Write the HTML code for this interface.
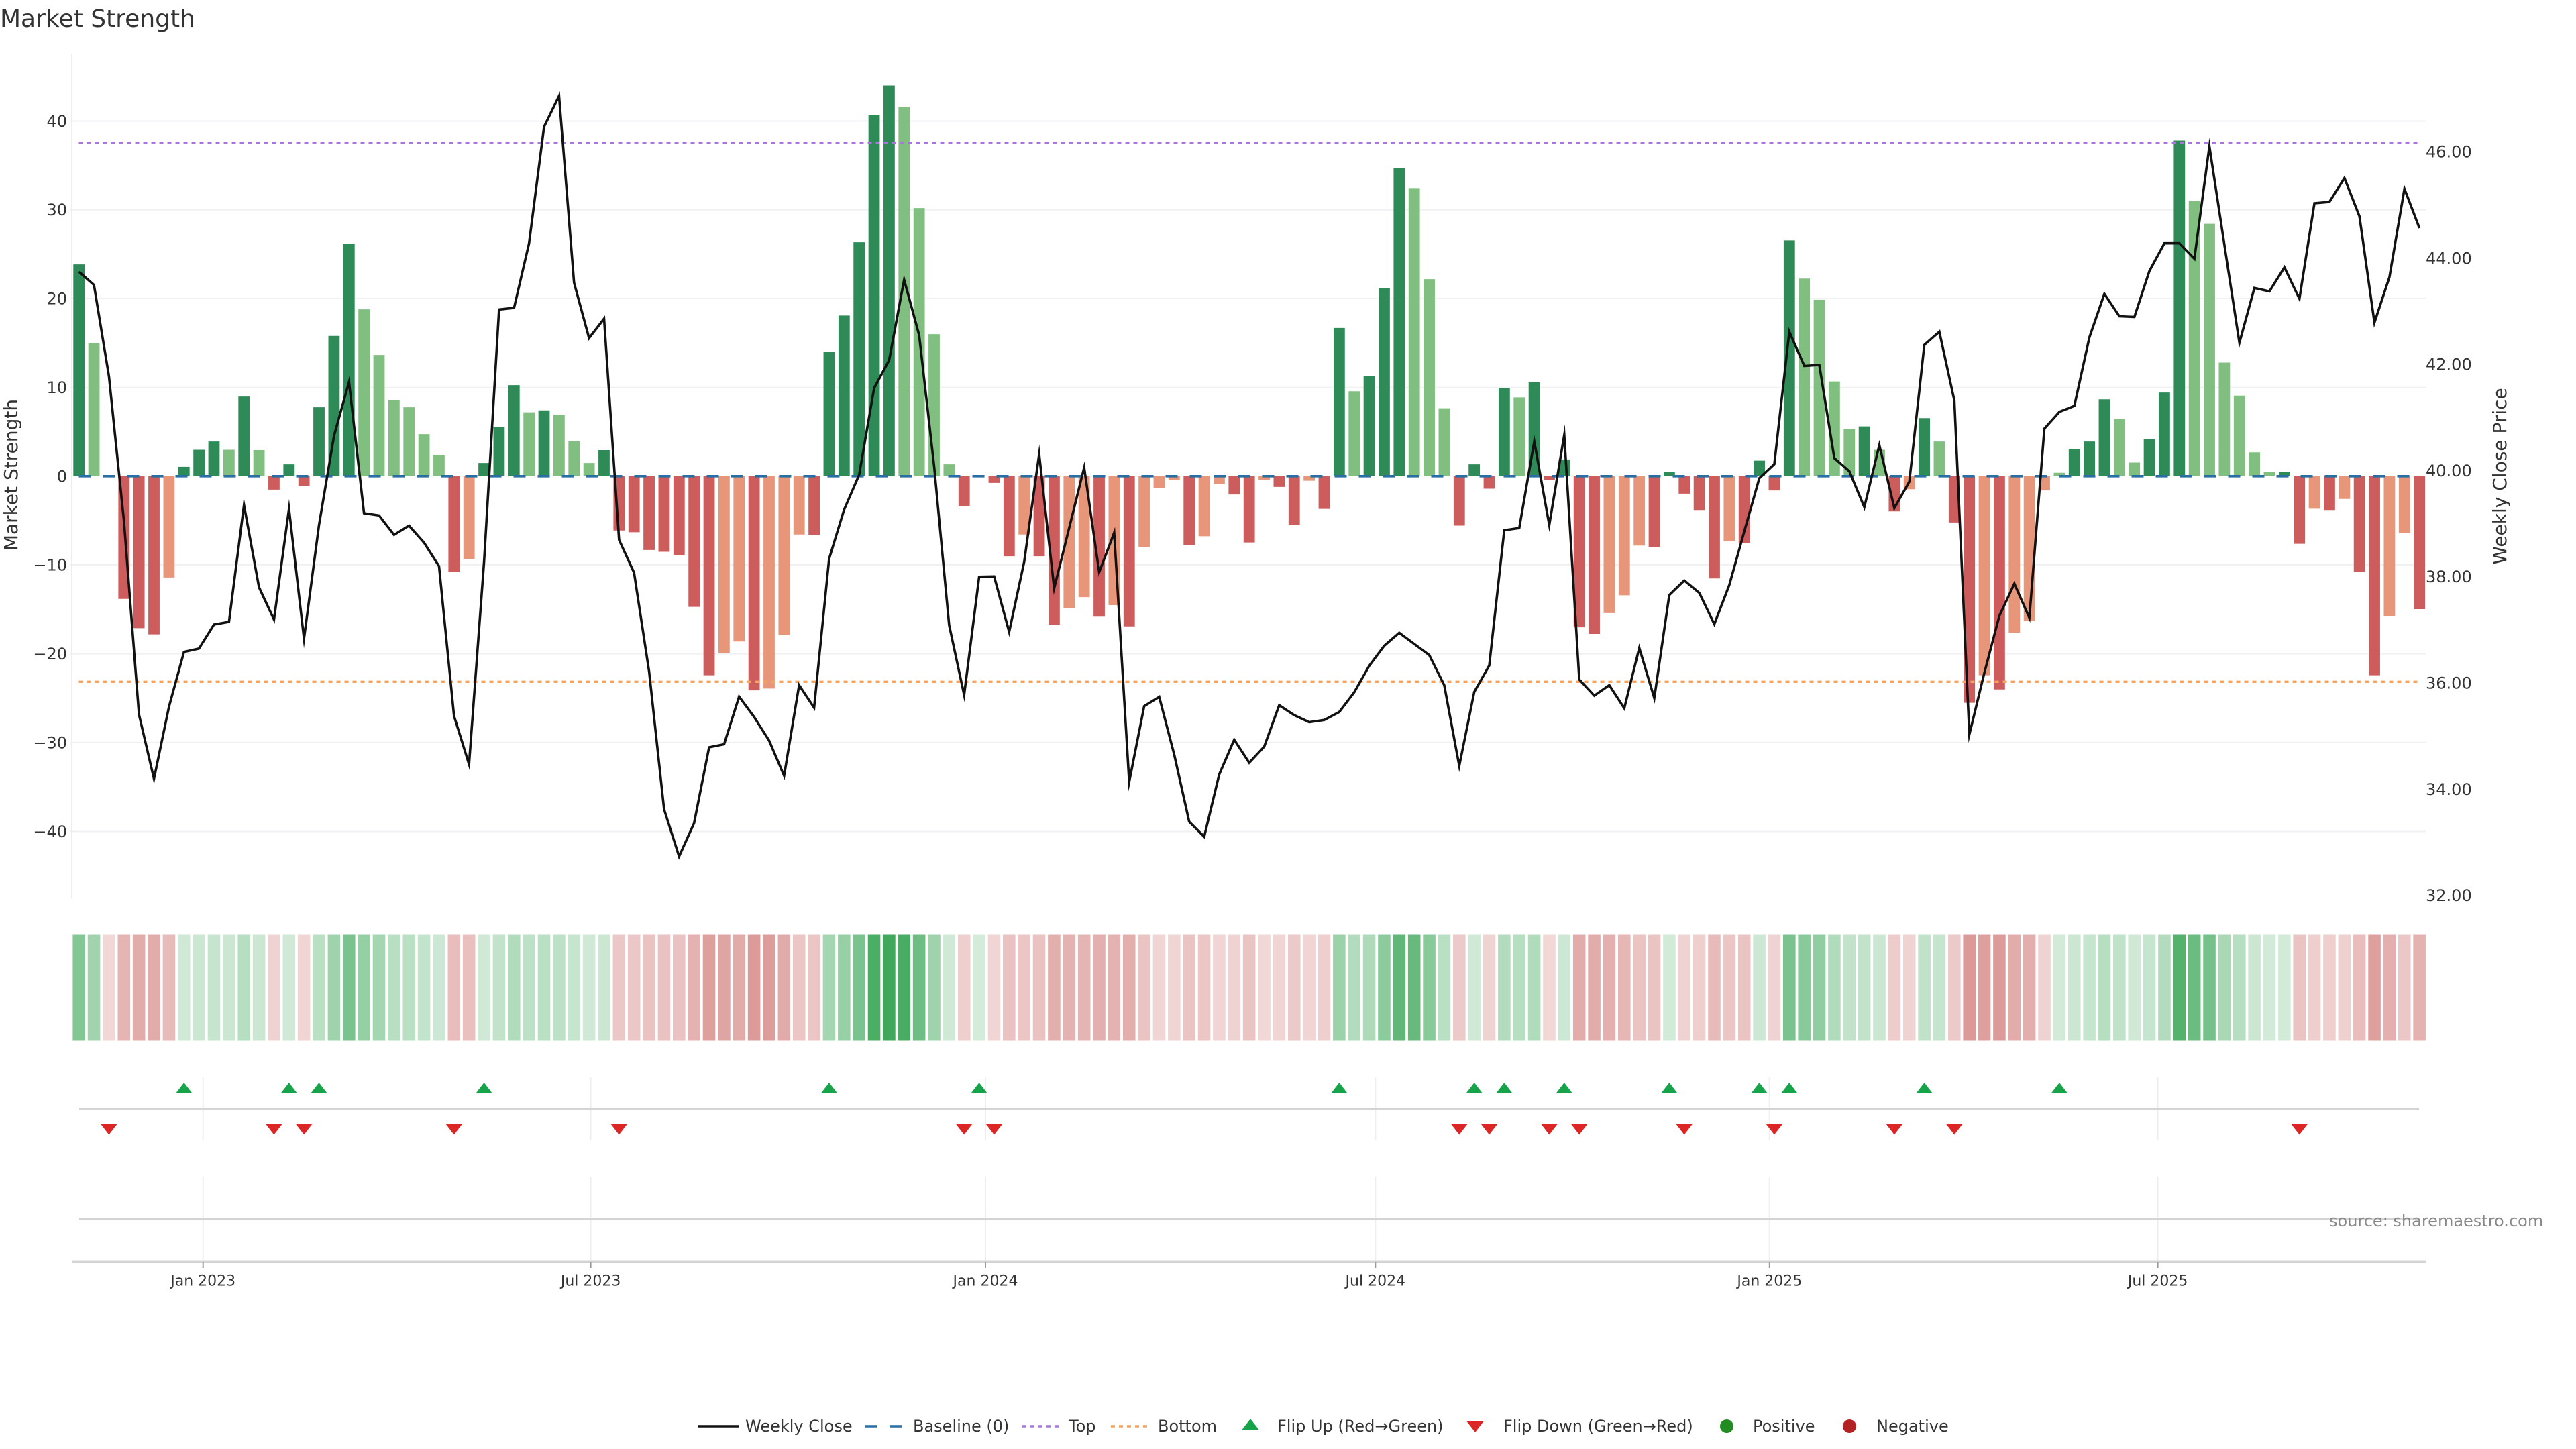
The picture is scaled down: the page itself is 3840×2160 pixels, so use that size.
<!DOCTYPE html>
<html lang="en"><head><meta charset="utf-8"><title>Market Strength</title>
<style>
html,body{margin:0;padding:0;background:#fff;width:3840px;height:2160px;overflow:hidden}
svg{display:block;font-family:"DejaVu Sans","Liberation Sans",sans-serif}
path,polyline{vector-effect:non-scaling-stroke}
text{fill:#333}
.a{font-size:24px}
.x{font-size:22px;text-anchor:middle}
</style></head><body>
<svg width="3840" height="2160" viewBox="0 0 3840 2160" xmlns="http://www.w3.org/2000/svg">
<rect width="3840" height="2160" fill="#fff"/>
<text x="0" y="40" style="font-size:36px">Market Strength</text>

<!-- gridlines -->
<g stroke="#f1f1f4" stroke-width="2" fill="none">
<path d="M105 180.5H3616M105 312.7H3616M105 445H3616M105 577.6H3616M105 841.9H3616M105 974.6H3616M105 1106.8H3616M105 1239.5H3616"/>
</g>
<path d="M107 80V1339" stroke="#eeeeee" stroke-width="2" fill="none"/>

<!-- y axis labels -->
<g class="a" text-anchor="end">
<text x="100" y="189">40</text>
<text x="100" y="321">30</text>
<text x="100" y="453.5">20</text>
<text x="100" y="586">10</text>
<text x="100" y="718.5">0</text>
<text x="100" y="850.5">−10</text>
<text x="100" y="983">−20</text>
<text x="100" y="1115.5">−30</text>
<text x="100" y="1248">−40</text>
</g>
<g class="a">
<text x="3616" y="234.7">46.00</text>
<text x="3616" y="393.5">44.00</text>
<text x="3616" y="551.4">42.00</text>
<text x="3616" y="710">40.00</text>
<text x="3616" y="868">38.00</text>
<text x="3616" y="1026.7">36.00</text>
<text x="3616" y="1185">34.00</text>
<text x="3616" y="1343">32.00</text>
</g>
<text transform="translate(26 708) rotate(-90)" text-anchor="middle" style="font-size:28px">Market Strength</text>
<text transform="translate(3736 710) rotate(-90)" text-anchor="middle" style="font-size:28px">Weekly Close Price</text>

<!-- bars -->
<g transform="translate(117.7 710) scale(22.365 -13.24)" fill="none" stroke-width="16.8">
<path stroke="#2e8b57" d="M0 0V23.86M7 0V1.07M8 0V2.98M9 0V3.92M11 0V8.98M14 0V1.35M16 0V7.77M17 0V15.8M18 0V26.2M27 0V1.5M28 0V5.58M29 0V10.26M31 0V7.42M35 0V2.95M50 0V14M51 0V18.1M52 0V26.35M53 0V40.7M54 0V44M84 0V16.7M86 0V11.3M87 0V21.15M88 0V34.7M93 0V1.35M95 0V9.95M97 0V10.58M99 0V1.9M106 0V.45M112 0V1.77M114 0V26.56M119 0V5.62M123 0V6.55M133 0V3.1M134 0V3.92M135 0V8.67M138 0V4.16M139 0V9.43M140 0V37.8M147 0V.52"/>
<path stroke="#80bf80" d="M1 0V14.98M10 0V2.98M12 0V2.95M19 0V18.8M20 0V13.66M21 0V8.6M22 0V7.77M23 0V4.75M24 0V2.4M30 0V7.2M32 0V6.93M33 0V4M34 0V1.5M55 0V41.6M56 0V30.2M57 0V16M58 0V1.35M60 0V.1M85 0V9.57M89 0V32.45M90 0V22.2M91 0V7.66M96 0V8.88M115 0V22.26M116 0V19.87M117 0V10.68M118 0V5.34M120 0V2.98M124 0V3.92M132 0V.4M136 0V6.5M137 0V1.55M141 0V31M142 0V28.43M143 0V12.8M144 0V9.08M145 0V2.7M146 0V.45"/>
<path stroke="#cd5c5c" d="M3 0V-13.8M4 0V-17.1M5 0V-17.8M13 0V-1.5M15 0V-1.1M25 0V-10.8M36 0V-6.1M37 0V-6.3M38 0V-8.3M39 0V-8.5M40 0V-8.9M41 0V-14.7M42 0V-22.4M45 0V-24.1M49 0V-6.6M59 0V-3.4M61 0V-.75M62 0V-9M64 0V-9M65 0V-16.7M68 0V-15.8M70 0V-16.9M74 0V-7.7M77 0V-2.05M78 0V-7.45M80 0V-1.2M81 0V-5.5M83 0V-3.67M92 0V-5.55M94 0V-1.4M98 0V-.4M100 0V-17M101 0V-17.75M105 0V-8M107 0V-1.95M108 0V-3.8M109 0V-11.5M111 0V-7.55M113 0V-1.6M121 0V-3.95M125 0V-5.2M126 0V-25.5M128 0V-24M148 0V-7.6M150 0V-3.8M152 0V-10.75M153 0V-22.4M156 0V-14.95"/>
<path stroke="#e8967a" d="M2 0V-.1M6 0V-11.4M26 0V-9.3M43 0V-19.9M44 0V-18.6M46 0V-23.9M47 0V-17.9M48 0V-6.55M63 0V-6.55M66 0V-14.8M67 0V-13.6M69 0V-14.5M71 0V-8M72 0V-1.3M73 0V-.45M75 0V-6.75M76 0V-.87M79 0V-.4M82 0V-.5M102 0V-15.4M103 0V-13.4M104 0V-7.8M110 0V-7.3M122 0V-1.45M127 0V-22.4M129 0V-17.6M130 0V-16.3M131 0V-1.6M149 0V-3.65M151 0V-2.55M154 0V-15.75M155 0V-6.4"/>
</g>

<!-- reference lines -->
<path d="M117.5 709.8H3606" stroke="#2a6fa3" stroke-width="3.6" stroke-dasharray="18 18" fill="none"/>
<path d="M117.5 213H3606" stroke="#a678dc" stroke-width="3.4" stroke-dasharray="6 6" fill="none"/>
<path d="M117.5 1016.3H3606" stroke="#f4a460" stroke-width="3.4" stroke-dasharray="6 6" fill="none"/>

<!-- weekly close -->
<g transform="translate(117.7 0) scale(22.365 1)">
<polyline fill="none" stroke="#111" stroke-width="3.6" stroke-linejoin="miter" stroke-miterlimit="20" points="0,405 1,424.7 2,561 3,777 4,1065 5,1161 6,1053.5 7,971.8 8,966.8 9,931 10,927 11,752.8 12,875.4 13,923.6 14,758.3 15,952 16,782.6 17,649.7 18,569.3 19,765 20,768.4 21,797.3 22,783.6 23,808.8 24,844 25,1067.3 26,1139.4 27,838 28,461.4 29,459 30,362.7 31,189 32,142.8 33,421.5 34,504 35,475 36,804.7 37,853.8 38,1000.7 39,1206.4 40,1276.7 41,1227 42,1114 43,1109.5 44,1038.4 45,1068.7 46,1104 47,1156.4 48,1021.4 49,1055 50,833 51,759.7 52,708 53,578.5 54,537 55,417 56,499.5 57,695 58,931.9 59,1036 60,859.8 61,859.3 62,942 63,837.7 64,677 65,877 66,787 67,697 68,852.9 69,794 70,1165.6 71,1052.6 72,1038.8 73,1124.7 74,1224.8 75,1247.3 76,1154.5 77,1102.7 78,1137 79,1113 80,1051.2 81,1066 82,1076.5 83,1073.3 84,1061.3 85,1032 86,992.5 87,962.6 88,943.3 89,959.9 90,976.4 91,1021.4 92,1141.7 93,1031.5 94,992 95,790.4 96,787.2 97,658 98,782.6 99,648.3 100,1013 101,1037 102,1021.4 103,1055.8 104,965.8 105,1040.7 106,886.9 107,865.3 108,883.7 109,930.5 110,872 111,792 112,712.9 113,692 114,494.5 115,545.5 116,544 117,683 118,702.5 119,756 120,663.5 121,757.4 122,718 123,514 124,494.5 125,597 126,1094.9 127,1003 128,918 129,870 130,921 131,639 132,614 133,605 134,503 135,438 136,471.5 137,472.5 138,404 139,362.7 140,362.7 141,385.7 142,218 143,365 144,511 145,429.3 146,434.3 147,398.5 148,445.4 149,303 150,301 151,265.4 152,322.3 153,481 154,413 155,281.4 156,340"/>
</g>

<!-- heat strip -->
<g transform="translate(117.7 1393.5) scale(22.365 158)" fill="none" stroke-width="18.6">
<g stroke="rgb(22,150,55)">
<path d="M0 0V1" opacity=".53"/><path d="M1 0V1" opacity=".40"/><path d="M7 0V1" opacity=".20"/><path d="M8 0V1" opacity=".22"/><path d="M9 0V1" opacity=".24"/><path d="M10 0V1" opacity=".22"/><path d="M11 0V1" opacity=".31"/><path d="M12 0V1" opacity=".22"/><path d="M14 0V1" opacity=".20"/><path d="M16 0V1" opacity=".29"/><path d="M17 0V1" opacity=".41"/><path d="M18 0V1" opacity=".56"/><path d="M19 0V1" opacity=".45"/><path d="M20 0V1" opacity=".38"/><path d="M21 0V1" opacity=".30"/><path d="M22 0V1" opacity=".29"/><path d="M23 0V1" opacity=".25"/><path d="M24 0V1" opacity=".21"/><path d="M27 0V1" opacity=".20"/><path d="M28 0V1" opacity=".26"/><path d="M29 0V1" opacity=".33"/><path d="M30 0V1" opacity=".28"/><path d="M31 0V1" opacity=".29"/><path d="M32 0V1" opacity=".28"/><path d="M33 0V1" opacity=".24"/><path d="M34 0V1" opacity=".20"/><path d="M35 0V1" opacity=".22"/><path d="M50 0V1" opacity=".38"/><path d="M51 0V1" opacity=".44"/><path d="M52 0V1" opacity=".56"/><path d="M53 0V1" opacity=".77"/><path d="M54 0V1" opacity=".82"/><path d="M55 0V1" opacity=".78"/><path d="M56 0V1" opacity=".62"/><path d="M57 0V1" opacity=".41"/><path d="M58 0V1" opacity=".20"/><path d="M60 0V1" opacity=".18"/><path d="M84 0V1" opacity=".42"/><path d="M85 0V1" opacity=".32"/><path d="M86 0V1" opacity=".34"/><path d="M87 0V1" opacity=".49"/><path d="M88 0V1" opacity=".68"/><path d="M89 0V1" opacity=".65"/><path d="M90 0V1" opacity=".50"/><path d="M91 0V1" opacity=".29"/><path d="M93 0V1" opacity=".20"/><path d="M95 0V1" opacity=".32"/><path d="M96 0V1" opacity=".31"/><path d="M97 0V1" opacity=".33"/><path d="M99 0V1" opacity=".21"/><path d="M106 0V1" opacity=".19"/><path d="M112 0V1" opacity=".21"/><path d="M114 0V1" opacity=".56"/><path d="M115 0V1" opacity=".50"/><path d="M116 0V1" opacity=".47"/><path d="M117 0V1" opacity=".33"/><path d="M118 0V1" opacity=".26"/><path d="M119 0V1" opacity=".26"/><path d="M120 0V1" opacity=".22"/><path d="M123 0V1" opacity=".27"/><path d="M124 0V1" opacity=".24"/><path d="M132 0V1" opacity=".19"/><path d="M133 0V1" opacity=".22"/><path d="M134 0V1" opacity=".24"/><path d="M135 0V1" opacity=".31"/><path d="M136 0V1" opacity=".27"/><path d="M137 0V1" opacity=".20"/><path d="M138 0V1" opacity=".24"/><path d="M139 0V1" opacity=".32"/><path d="M140 0V1" opacity=".73"/><path d="M141 0V1" opacity=".63"/><path d="M142 0V1" opacity=".59"/><path d="M143 0V1" opacity=".37"/><path d="M144 0V1" opacity=".31"/><path d="M145 0V1" opacity=".22"/><path d="M146 0V1" opacity=".19"/><path d="M147 0V1" opacity=".19"/>
</g>
<g stroke="rgb(180,40,35)">
<path d="M2 0V1" opacity=".18"/><path d="M3 0V1" opacity=".34"/><path d="M4 0V1" opacity=".38"/><path d="M5 0V1" opacity=".38"/><path d="M6 0V1" opacity=".31"/><path d="M13 0V1" opacity=".20"/><path d="M15 0V1" opacity=".19"/><path d="M25 0V1" opacity=".30"/><path d="M26 0V1" opacity=".29"/><path d="M36 0V1" opacity=".25"/><path d="M37 0V1" opacity=".25"/><path d="M38 0V1" opacity=".28"/><path d="M39 0V1" opacity=".28"/><path d="M40 0V1" opacity=".28"/><path d="M41 0V1" opacity=".35"/><path d="M42 0V1" opacity=".44"/><path d="M43 0V1" opacity=".41"/><path d="M44 0V1" opacity=".39"/><path d="M45 0V1" opacity=".46"/><path d="M46 0V1" opacity=".45"/><path d="M47 0V1" opacity=".39"/><path d="M48 0V1" opacity=".26"/><path d="M49 0V1" opacity=".26"/><path d="M59 0V1" opacity=".22"/><path d="M61 0V1" opacity=".19"/><path d="M62 0V1" opacity=".28"/><path d="M63 0V1" opacity=".26"/><path d="M64 0V1" opacity=".28"/><path d="M65 0V1" opacity=".37"/><path d="M66 0V1" opacity=".35"/><path d="M67 0V1" opacity=".34"/><path d="M68 0V1" opacity=".36"/><path d="M69 0V1" opacity=".35"/><path d="M70 0V1" opacity=".37"/><path d="M71 0V1" opacity=".27"/><path d="M72 0V1" opacity=".19"/><path d="M73 0V1" opacity=".19"/><path d="M74 0V1" opacity=".27"/><path d="M75 0V1" opacity=".26"/><path d="M76 0V1" opacity=".19"/><path d="M77 0V1" opacity=".20"/><path d="M78 0V1" opacity=".27"/><path d="M79 0V1" opacity=".18"/><path d="M80 0V1" opacity=".19"/><path d="M81 0V1" opacity=".24"/><path d="M82 0V1" opacity=".19"/><path d="M83 0V1" opacity=".22"/><path d="M92 0V1" opacity=".24"/><path d="M94 0V1" opacity=".20"/><path d="M98 0V1" opacity=".18"/><path d="M100 0V1" opacity=".38"/><path d="M101 0V1" opacity=".38"/><path d="M102 0V1" opacity=".36"/><path d="M103 0V1" opacity=".33"/><path d="M104 0V1" opacity=".27"/><path d="M105 0V1" opacity=".27"/><path d="M107 0V1" opacity=".20"/><path d="M108 0V1" opacity=".22"/><path d="M109 0V1" opacity=".31"/><path d="M110 0V1" opacity=".26"/><path d="M111 0V1" opacity=".27"/><path d="M113 0V1" opacity=".20"/><path d="M121 0V1" opacity=".23"/><path d="M122 0V1" opacity=".20"/><path d="M125 0V1" opacity=".24"/><path d="M126 0V1" opacity=".47"/><path d="M127 0V1" opacity=".44"/><path d="M128 0V1" opacity=".46"/><path d="M129 0V1" opacity=".38"/><path d="M130 0V1" opacity=".37"/><path d="M131 0V1" opacity=".20"/><path d="M148 0V1" opacity=".27"/><path d="M149 0V1" opacity=".22"/><path d="M150 0V1" opacity=".22"/><path d="M151 0V1" opacity=".21"/><path d="M152 0V1" opacity=".30"/><path d="M153 0V1" opacity=".44"/><path d="M154 0V1" opacity=".36"/><path d="M155 0V1" opacity=".25"/><path d="M156 0V1" opacity=".35"/>
</g>
</g>

<!-- lower panels: vertical grid -->
<g stroke="#eeeeee" stroke-width="2" fill="none">
<path d="M302.7 1606V1700M880.6 1606V1700M1469 1606V1700M2050.3 1606V1700M2637.8 1606V1700M3216.6 1606V1700"/>
<path d="M302.7 1754V1881M880.6 1754V1881M1469 1754V1881M2050.3 1754V1881M2637.8 1754V1881M3216.6 1754V1881"/>
</g>
<g stroke="#d4d4d4" stroke-width="3" fill="none">
<path d="M118 1653H3606M118 1816.7H3606"/>
<path d="M108 1881H3616"/>
</g>
<path d="M302.7 1881V1890M880.6 1881V1890M1469 1881V1890M2050.3 1881V1890M2637.8 1881V1890M3216.6 1881V1890" stroke="#999" stroke-width="2" fill="none"/>

<!-- flip markers -->
<g fill="#16a34a">
<polygon points="274.3,1614 286.3,1629.5 262.3,1629.5"/>
<polygon points="430.8,1614 442.8,1629.5 418.8,1629.5"/>
<polygon points="475.5,1614 487.5,1629.5 463.5,1629.5"/>
<polygon points="721.6,1614 733.6,1629.5 709.6,1629.5"/>
<polygon points="1236,1614 1248,1629.5 1224,1629.5"/>
<polygon points="1459.6,1614 1471.6,1629.5 1447.6,1629.5"/>
<polygon points="1996.4,1614 2008.4,1629.5 1984.4,1629.5"/>
<polygon points="2197.7,1614 2209.7,1629.5 2185.7,1629.5"/>
<polygon points="2242.4,1614 2254.4,1629.5 2230.4,1629.5"/>
<polygon points="2331.8,1614 2343.8,1629.5 2319.8,1629.5"/>
<polygon points="2488.4,1614 2500.4,1629.5 2476.4,1629.5"/>
<polygon points="2622.6,1614 2634.6,1629.5 2610.6,1629.5"/>
<polygon points="2667.3,1614 2679.3,1629.5 2655.3,1629.5"/>
<polygon points="2868.6,1614 2880.6,1629.5 2856.6,1629.5"/>
<polygon points="3069.9,1614 3081.9,1629.5 3057.9,1629.5"/>
</g>
<g fill="#dc2626">
<polygon points="150.4,1676 174.4,1676 162.4,1691.5"/>
<polygon points="396.4,1676 420.4,1676 408.4,1691.5"/>
<polygon points="441.2,1676 465.2,1676 453.2,1691.5"/>
<polygon points="664.8,1676 688.8,1676 676.8,1691.5"/>
<polygon points="910.8,1676 934.8,1676 922.8,1691.5"/>
<polygon points="1425.2,1676 1449.2,1676 1437.2,1691.5"/>
<polygon points="1470,1676 1494,1676 1482,1691.5"/>
<polygon points="2163.3,1676 2187.3,1676 2175.3,1691.5"/>
<polygon points="2208,1676 2232,1676 2220,1691.5"/>
<polygon points="2297.5,1676 2321.5,1676 2309.5,1691.5"/>
<polygon points="2342.2,1676 2366.2,1676 2354.2,1691.5"/>
<polygon points="2498.7,1676 2522.7,1676 2510.7,1691.5"/>
<polygon points="2632.9,1676 2656.9,1676 2644.9,1691.5"/>
<polygon points="2811.9,1676 2835.9,1676 2823.9,1691.5"/>
<polygon points="2901.3,1676 2925.3,1676 2913.3,1691.5"/>
<polygon points="3415.7,1676 3439.7,1676 3427.7,1691.5"/>
</g>

<!-- x labels -->
<g class="x">
<text x="302.7" y="1916.5">Jan 2023</text>
<text x="880.6" y="1916.5">Jul 2023</text>
<text x="1469" y="1916.5">Jan 2024</text>
<text x="2050.3" y="1916.5">Jul 2024</text>
<text x="2637.8" y="1916.5">Jan 2025</text>
<text x="3216.6" y="1916.5">Jul 2025</text>
</g>
<text x="3472" y="1828" style="font-size:24px;fill:#888">source: sharemaestro.com</text>

<!-- legend -->
<path d="M1041 2126H1101" stroke="#111" stroke-width="3.6" fill="none"/>
<path d="M1290 2126H1346" stroke="#2a6fa3" stroke-width="3.6" stroke-dasharray="18 18" fill="none"/>
<path d="M1524 2126H1582" stroke="#a678dc" stroke-width="3.4" stroke-dasharray="6 6" fill="none"/>
<path d="M1656 2126H1714" stroke="#f4a460" stroke-width="3.4" stroke-dasharray="6 6" fill="none"/>
<polygon points="1864,2115 1876.5,2131 1851.5,2131" fill="#16a34a"/>
<polygon points="2186.5,2119 2211.5,2119 2199,2135" fill="#dc2626"/>
<circle cx="2574" cy="2126" r="10" fill="#228b22"/>
<circle cx="2757" cy="2126" r="10" fill="#b22222"/>
<g class="a">
<text x="1111" y="2134">Weekly Close</text>
<text x="1361" y="2134">Baseline (0)</text>
<text x="1593" y="2134">Top</text>
<text x="1726" y="2134">Bottom</text>
<text x="1904" y="2134">Flip Up (Red→Green)</text>
<text x="2241" y="2134">Flip Down (Green→Red)</text>
<text x="2613" y="2134">Positive</text>
<text x="2797" y="2134">Negative</text>
</g>
</svg>
</body></html>
